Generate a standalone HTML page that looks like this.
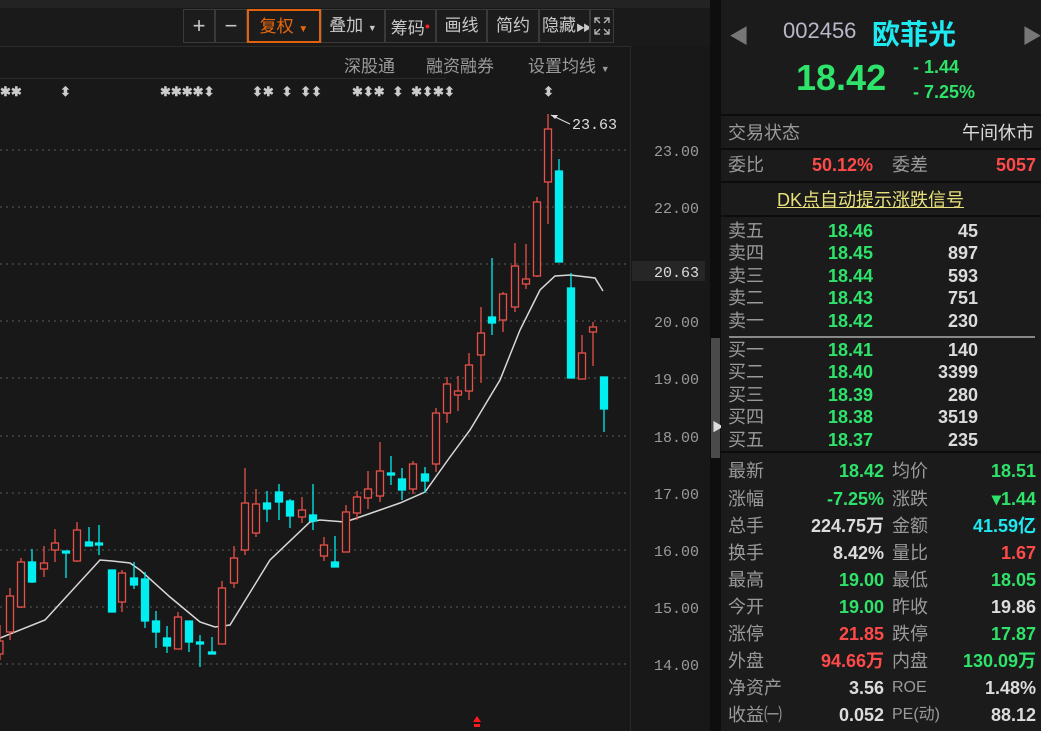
<!DOCTYPE html>
<html><head><meta charset="utf-8"><style>
*{margin:0;padding:0;box-sizing:border-box}
body{width:1041px;height:731px;background:#181818;overflow:hidden;position:relative;font-family:"Liberation Sans","Noto Sans CJK SC",sans-serif;color:#c8c8c8}
.a{position:absolute;white-space:nowrap}
.tb{position:absolute;top:9px;height:34px;border:1px solid #3a3a3a;background:#1c1c1c;color:#c8c8c8;font-size:17px;line-height:32px;text-align:center;white-space:nowrap;overflow:hidden}
.r{color:#ff4a4a}.g{color:#2ee36a}.w{color:#dcdcdc}.c{color:#1ee8f0}.l{color:#9a9a9a}
.row{position:absolute;left:728px;width:308px;height:28px;font-size:18px;line-height:28px}
.row span{position:absolute}
.ob{position:absolute;left:728px;width:300px;height:22.5px;font-size:18px;line-height:22px}
.ob span{position:absolute}
.hl{position:absolute;left:721px;width:320px;height:2px;background:#0c0c0c}
</style></head><body>
<div class="a" style="left:0;top:0;width:1041px;height:8px;background:#232323"></div>
<div class="a" style="left:0;top:8px;width:710px;height:38px;background:#1a1a1a"></div>
<div class="tb" style="left:183px;width:32px;font-size:22px">+</div>
<div class="tb" style="left:215px;width:32px;font-size:22px">−</div>
<div class="tb" style="left:247px;width:74px;border:2px solid #e0620e;color:#e8680e">复权 <span style="font-size:10px">▼</span></div>
<div class="tb" style="left:321px;width:64px">叠加 <span style="font-size:9px">▼</span></div>
<div class="tb" style="left:385px;width:51px">筹码<span style="color:#ff2020;font-size:9px;vertical-align:5px">●</span></div>
<div class="tb" style="left:436px;width:51px">画线</div>
<div class="tb" style="left:487px;width:52px">简约</div>
<div class="tb" style="left:539px;width:51px;text-align:left;padding-left:2px">隐藏<span style="font-size:9px;letter-spacing:-2px">▶▶</span></div>
<div class="tb" style="left:590px;width:24px"><svg width="22" height="32" viewBox="0 0 22 32"><g stroke="#bbb" fill="none" stroke-width="1.3"><path d="M4 13 V8 H9 M4 8 L9 13 M13 8 H18 V13 M18 8 L13 13 M4 19 V24 H9 M4 24 L9 19 M18 19 V24 H13 M18 24 L13 19"/></g></svg></div>
<div class="a" style="left:0;top:46px;width:630px;height:1px;background:#2a2a2a"></div>
<div class="a l" style="left:344px;top:52px;font-size:17px">深股通</div>
<div class="a l" style="left:426px;top:52px;font-size:17px">融资融券</div>
<div class="a l" style="left:528px;top:52px;font-size:17px">设置均线 <span style="font-size:9px">▼</span></div>
<div class="a" style="left:0;top:78px;width:446px;height:1px;background:#2a2a2a"></div>
<div class="a" style="left:630px;top:46px;width:1px;height:685px;background:#2a2a2a"></div>
<div class="a" style="left:710px;top:0;width:11px;height:731px;background:#0e0e0e"></div>
<div class="a" style="left:711px;top:338px;width:9px;height:120px;background:#4a4a4a"></div>
<div class="a" style="left:712px;top:418px;color:#ddd;font-size:12px">▶</div>
<svg class="a" style="left:0;top:0" width="710" height="731">
<g stroke="#3a3a3a" stroke-width="2" stroke-dasharray="2 4">
<line x1="0" y1="150" x2="630" y2="150"/><line x1="0" y1="207" x2="630" y2="207"/><line x1="0" y1="264" x2="630" y2="264"/><line x1="0" y1="321" x2="630" y2="321"/><line x1="0" y1="378" x2="630" y2="378"/><line x1="0" y1="436" x2="630" y2="436"/><line x1="0" y1="493" x2="630" y2="493"/><line x1="0" y1="550" x2="630" y2="550"/><line x1="0" y1="607" x2="630" y2="607"/><line x1="0" y1="664" x2="630" y2="664"/>
</g>
<g fill="#ccc" font-family="Liberation Mono,monospace" font-size="13" font-weight="bold">
<text x="0" y="96">✱✱</text><text x="60" y="96">⬍</text><text x="160" y="96">✱✱✱✱⬍</text><text x="252" y="96">⬍✱ ⬍ ⬍⬍</text><text x="352" y="96">✱⬍✱ ⬍ ✱⬍✱⬍</text><text x="543" y="96">⬍</text>
</g>
<g fill="#9a9a9a" font-family="Liberation Mono,monospace" font-size="15">
<text x="654" y="156">23.00</text><text x="654" y="213">22.00</text><text x="654" y="327">20.00</text><text x="654" y="384">19.00</text><text x="654" y="442">18.00</text><text x="654" y="499">17.00</text><text x="654" y="556">16.00</text><text x="654" y="613">15.00</text><text x="654" y="670">14.00</text>
</g>
<rect x="632" y="261" width="73" height="20" fill="#262626"/>
<text x="654" y="277" fill="#ddd" font-family="Liberation Mono,monospace" font-size="15">20.63</text>
<text x="572" y="129" fill="#ddd" font-family="Liberation Mono,monospace" font-size="15">23.63</text>
<path d="M551 115 L570 124" stroke="#ddd" fill="none"/><path d="M551 115 l7 0 l-3 4z" fill="#ddd"/>
<polyline fill="none" stroke="#d8d8d8" stroke-width="1.5" points="0,638 45,620 100,560 112,561 130,563 140,570 170,597 200,622 215,627 230,625 270,560 310,522 320,520 345,522 357,518 380,510 400,503 425,492 450,457 470,430 500,380 520,330 540,290 555,276 570,275 595,278 603,291"/>
<g stroke-width="1.3">
<g stroke="#e8504a" fill="#181818">
<line x1="0" y1="625" x2="0" y2="660"/><rect x="-3" y="641" width="6" height="13"/>
<line x1="10" y1="588" x2="10" y2="640"/><rect x="6.5" y="596" width="7" height="36"/>
<line x1="21" y1="558" x2="21" y2="608"/><rect x="17.5" y="562" width="7" height="45"/>
<line x1="44" y1="546" x2="44" y2="577"/><rect x="40.5" y="563" width="7" height="6"/>
<line x1="55" y1="529" x2="55" y2="562"/><rect x="51.5" y="543" width="7" height="7"/>
<line x1="77" y1="522" x2="77" y2="562"/><rect x="73.5" y="530" width="7" height="31"/>
<line x1="122" y1="570" x2="122" y2="612"/><rect x="118.5" y="573" width="7" height="29"/>
<line x1="178" y1="612" x2="178" y2="649"/><rect x="174.5" y="617" width="7" height="32"/>
<line x1="222" y1="581" x2="222" y2="644"/><rect x="218.5" y="588" width="7" height="56"/>
<line x1="234" y1="546" x2="234" y2="588"/><rect x="230.5" y="558" width="7" height="25"/>
<line x1="245" y1="468" x2="245" y2="555"/><rect x="241.5" y="503" width="7" height="47"/>
<line x1="256" y1="489" x2="256" y2="537"/><rect x="252.5" y="504" width="7" height="29"/>
<line x1="302" y1="497" x2="302" y2="523"/><rect x="298.5" y="510" width="7" height="7"/>
<line x1="324" y1="537" x2="324" y2="561"/><rect x="320.5" y="545" width="7" height="11"/>
<line x1="346" y1="505" x2="346" y2="552"/><rect x="342.5" y="512" width="7" height="40"/>
<line x1="357" y1="491" x2="357" y2="520"/><rect x="353.5" y="497" width="7" height="16"/>
<line x1="368" y1="471" x2="368" y2="509"/><rect x="364.5" y="489" width="7" height="9"/>
<line x1="380" y1="442" x2="380" y2="502"/><rect x="376.5" y="471" width="7" height="25"/>
<line x1="413" y1="461" x2="413" y2="494"/><rect x="409.5" y="464" width="7" height="25"/>
<line x1="436" y1="408" x2="436" y2="472"/><rect x="432.5" y="413" width="7" height="51"/>
<line x1="447" y1="377" x2="447" y2="423"/><rect x="443.5" y="384" width="7" height="29"/>
<line x1="458" y1="376" x2="458" y2="411"/><rect x="454.5" y="391" width="7" height="4"/>
<line x1="469" y1="353" x2="469" y2="400"/><rect x="465.5" y="365" width="7" height="26"/>
<line x1="481" y1="307" x2="481" y2="383"/><rect x="477.5" y="333" width="7" height="22"/>
<line x1="503" y1="292" x2="503" y2="332"/><rect x="499.5" y="294" width="7" height="26"/>
<line x1="515" y1="243" x2="515" y2="312"/><rect x="511.5" y="266" width="7" height="41"/>
<line x1="526" y1="244" x2="526" y2="289"/><rect x="522.5" y="279" width="7" height="5"/>
<line x1="537" y1="197" x2="537" y2="277"/><rect x="533.5" y="202" width="7" height="74"/>
<line x1="548" y1="114" x2="548" y2="224"/><rect x="544.5" y="129" width="7" height="53"/>
<line x1="582" y1="335" x2="582" y2="379"/><rect x="578.5" y="353" width="7" height="26"/>
<line x1="593" y1="322" x2="593" y2="366"/><rect x="589.5" y="327" width="7" height="5"/>
</g>
<g stroke="#00eef0" fill="#00eef0">
<line x1="32" y1="549" x2="32" y2="583"/><rect x="28.5" y="562" width="7" height="20"/>
<line x1="66" y1="552" x2="66" y2="578"/><rect x="62.5" y="551" width="7" height="2"/>
<line x1="89" y1="527" x2="89" y2="546"/><rect x="85.5" y="542" width="7" height="4"/>
<line x1="99" y1="525" x2="99" y2="555"/><rect x="95.5" y="543" width="7" height="2"/>
<line x1="112" y1="570" x2="112" y2="612"/><rect x="108.5" y="570" width="7" height="42"/>
<line x1="134" y1="562" x2="134" y2="589"/><rect x="130.5" y="578" width="7" height="7"/>
<line x1="145" y1="572" x2="145" y2="628"/><rect x="141.5" y="579" width="7" height="42"/>
<line x1="156" y1="611" x2="156" y2="648"/><rect x="152.5" y="621" width="7" height="11"/>
<line x1="167" y1="626" x2="167" y2="653"/><rect x="163.5" y="638" width="7" height="8"/>
<line x1="189" y1="621" x2="189" y2="652"/><rect x="185.5" y="621" width="7" height="21"/>
<line x1="200" y1="635" x2="200" y2="667"/><rect x="196.5" y="642" width="7" height="2"/>
<line x1="212" y1="637" x2="212" y2="653"/><rect x="208.5" y="652" width="7" height="2"/>
<line x1="267" y1="491" x2="267" y2="522"/><rect x="263.5" y="503" width="7" height="6"/>
<line x1="279" y1="484" x2="279" y2="520"/><rect x="275.5" y="492" width="7" height="10"/>
<line x1="290" y1="499" x2="290" y2="528"/><rect x="286.5" y="501" width="7" height="15"/>
<line x1="313" y1="484" x2="313" y2="530"/><rect x="309.5" y="515" width="7" height="6"/>
<line x1="335" y1="536" x2="335" y2="567"/><rect x="331.5" y="562" width="7" height="5"/>
<line x1="391" y1="456" x2="391" y2="485"/><rect x="387.5" y="473" width="7" height="2"/>
<line x1="402" y1="468" x2="402" y2="500"/><rect x="398.5" y="479" width="7" height="11"/>
<line x1="425" y1="467" x2="425" y2="493"/><rect x="421.5" y="474" width="7" height="7"/>
<line x1="492" y1="258" x2="492" y2="335"/><rect x="488.5" y="317" width="7" height="6"/>
<line x1="559" y1="159" x2="559" y2="262"/><rect x="555.5" y="171" width="7" height="91"/>
<line x1="571" y1="273" x2="571" y2="378"/><rect x="567.5" y="288" width="7" height="90"/>
<line x1="604" y1="377" x2="604" y2="432"/><rect x="600.5" y="377" width="7" height="32"/>
</g>
</g>
<path d="M477 716 l4 6 h-8z M474 724 h6 v3 h-6z" fill="#ff1a1a"/>
</svg>

<div class="a" style="left:721px;top:0;width:320px;height:731px;background:#1b1b1b"></div>
<div class="a" style="left:729px;top:20px;font-size:20px;color:#777">◀</div>
<div class="a" style="left:1022px;top:20px;font-size:20px;color:#777">▶</div>
<div class="a" style="left:783px;top:18px;font-size:22px;color:#b8b8c8">002456</div>
<div class="a c" style="left:872px;top:13px;font-size:28px;font-weight:bold">欧菲光</div>
<div class="a g" style="left:796px;top:57px;font-size:36px;font-weight:bold">18.42</div>
<div class="a g" style="left:913px;top:57px;font-size:18px;font-weight:bold">- 1.44</div>
<div class="a g" style="left:913px;top:82px;font-size:18px;font-weight:bold">- 7.25%</div>
<div class="hl" style="top:114px"></div>
<div class="row" style="top:119px"><span class="l" style="left:0">交易状态</span><span class="w" style="right:2px">午间休市</span></div>
<div class="hl" style="top:148px"></div>
<div class="row" style="top:151px"><span class="l" style="left:0">委比</span><span class="r" style="left:84px;font-weight:bold">50.12%</span><span class="l" style="left:164px">委差</span><span class="r" style="right:0;font-weight:bold">5057</span></div>
<div class="hl" style="top:181px"></div>
<div class="a" style="left:777px;top:186px;font-size:18px;color:#e8e07a;text-decoration:underline">DK点自动提示涨跌信号</div>
<div class="hl" style="top:215px"></div>
<div class="ob" style="top:220px"><span class="l">卖五</span><span class="g" style="left:100px;font-weight:bold">18.46</span><span class="w" style="right:50px;font-weight:bold">45</span></div>
<div class="ob" style="top:242px"><span class="l">卖四</span><span class="g" style="left:100px;font-weight:bold">18.45</span><span class="w" style="right:50px;font-weight:bold">897</span></div>
<div class="ob" style="top:265px"><span class="l">卖三</span><span class="g" style="left:100px;font-weight:bold">18.44</span><span class="w" style="right:50px;font-weight:bold">593</span></div>
<div class="ob" style="top:287px"><span class="l">卖二</span><span class="g" style="left:100px;font-weight:bold">18.43</span><span class="w" style="right:50px;font-weight:bold">751</span></div>
<div class="ob" style="top:310px"><span class="l">卖一</span><span class="g" style="left:100px;font-weight:bold">18.42</span><span class="w" style="right:50px;font-weight:bold">230</span></div>
<div class="a" style="left:729px;top:336px;width:306px;height:2px;background:#888"></div>
<div class="ob" style="top:339px"><span class="l">买一</span><span class="g" style="left:100px;font-weight:bold">18.41</span><span class="w" style="right:50px;font-weight:bold">140</span></div>
<div class="ob" style="top:361px"><span class="l">买二</span><span class="g" style="left:100px;font-weight:bold">18.40</span><span class="w" style="right:50px;font-weight:bold">3399</span></div>
<div class="ob" style="top:384px"><span class="l">买三</span><span class="g" style="left:100px;font-weight:bold">18.39</span><span class="w" style="right:50px;font-weight:bold">280</span></div>
<div class="ob" style="top:406px"><span class="l">买四</span><span class="g" style="left:100px;font-weight:bold">18.38</span><span class="w" style="right:50px;font-weight:bold">3519</span></div>
<div class="ob" style="top:429px"><span class="l">买五</span><span class="g" style="left:100px;font-weight:bold">18.37</span><span class="w" style="right:50px;font-weight:bold">235</span></div>
<div class="hl" style="top:451px"></div>
<div class="row" style="top:457px"><span class="l">最新</span><span class="g" style="right:152px;font-weight:bold">18.42</span><span class="l" style="left:164px">均价</span><span class="g" style="right:0;font-weight:bold">18.51</span></div>
<div class="row" style="top:485px"><span class="l">涨幅</span><span class="g" style="right:152px;font-weight:bold">-7.25%</span><span class="l" style="left:164px">涨跌</span><span class="g" style="right:0;font-weight:bold">▾1.44</span></div>
<div class="row" style="top:512px"><span class="l">总手</span><span class="w" style="right:152px;font-weight:bold">224.75万</span><span class="l" style="left:164px">金额</span><span class="c" style="right:0;font-weight:bold">41.59亿</span></div>
<div class="row" style="top:539px"><span class="l">换手</span><span class="w" style="right:152px;font-weight:bold">8.42%</span><span class="l" style="left:164px">量比</span><span class="r" style="right:0;font-weight:bold">1.67</span></div>
<div class="row" style="top:566px"><span class="l">最高</span><span class="g" style="right:152px;font-weight:bold">19.00</span><span class="l" style="left:164px">最低</span><span class="g" style="right:0;font-weight:bold">18.05</span></div>
<div class="row" style="top:593px"><span class="l">今开</span><span class="g" style="right:152px;font-weight:bold">19.00</span><span class="l" style="left:164px">昨收</span><span class="w" style="right:0;font-weight:bold">19.86</span></div>
<div class="row" style="top:620px"><span class="l">涨停</span><span class="r" style="right:152px;font-weight:bold">21.85</span><span class="l" style="left:164px">跌停</span><span class="g" style="right:0;font-weight:bold">17.87</span></div>
<div class="row" style="top:647px"><span class="l">外盘</span><span class="r" style="right:152px;font-weight:bold">94.66万</span><span class="l" style="left:164px">内盘</span><span class="g" style="right:0;font-weight:bold">130.09万</span></div>
<div class="row" style="top:674px"><span class="l">净资产</span><span class="w" style="right:152px;font-weight:bold">3.56</span><span class="l" style="left:164px;font-size:16px">ROE</span><span class="w" style="right:0;font-weight:bold">1.48%</span></div>
<div class="row" style="top:701px"><span class="l">收益㈠</span><span class="w" style="right:152px;font-weight:bold">0.052</span><span class="l" style="left:164px;font-size:16px">PE(动)</span><span class="w" style="right:0;font-weight:bold">88.12</span></div>
</body></html>
